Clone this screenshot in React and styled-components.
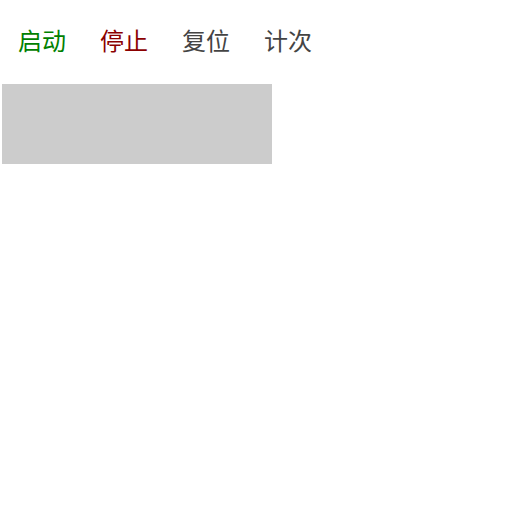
import React from 'react';
import styled, { createGlobalStyle } from 'styled-components';

const GlobalStyle = createGlobalStyle`
  body {
    margin: 0;
    background: #fff;
    font-family: "Noto Sans CJK SC", "Noto Sans", sans-serif;
  }
`;

const Page = styled.div`
  padding: 2px;
`;

const Toolbar = styled.div`
  display: flex;
  gap: 2px;
`;

const Button = styled.button`
  width: 80px;
  padding: 21px 0 25px;
  border: none;
  background: transparent;
  font-family: inherit;
  font-size: 24px;
  line-height: 34px;
  color: ${(p) => p.color || '#444'};
  cursor: pointer;
`;

const Display = styled.div`
  width: 270px;
  height: 80px;
  margin-top: 2px;
  background: #ccc;
`;

export default function App() {
  return (
    <Page>
      <GlobalStyle />
      <Toolbar>
        <Button color="#008000">启动</Button>
        <Button color="#8b0000">停止</Button>
        <Button>复位</Button>
        <Button>计次</Button>
      </Toolbar>
      <Display />
    </Page>
  );
}
